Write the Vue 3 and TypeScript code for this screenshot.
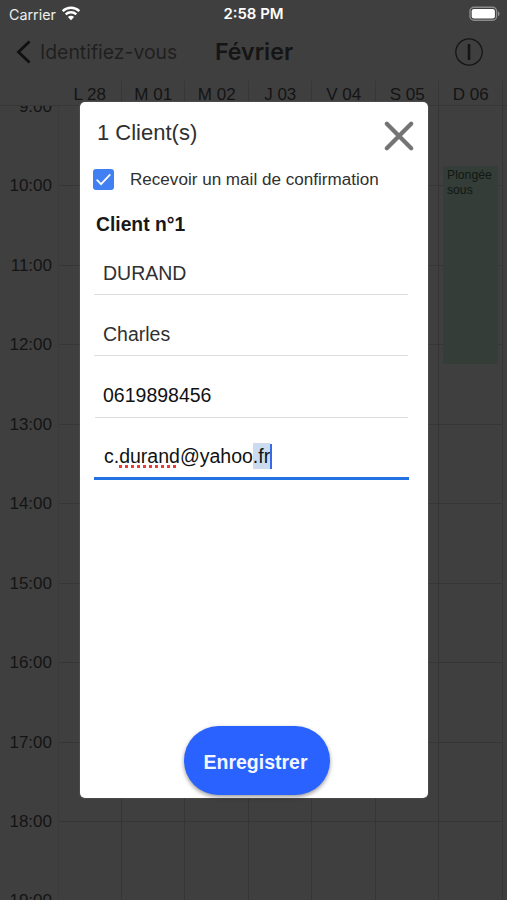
<script setup lang="ts">
import { ref } from 'vue'

interface Day { label: string; event?: string }

const days: Day[] = [
  { label: 'L 28' },
  { label: 'M 01' },
  { label: 'M 02' },
  { label: 'J 03' },
  { label: 'V 04' },
  { label: 'S 05' },
  { label: 'D 06', event: 'Plongée sous' },
]
const hours: string[] = Array.from({ length: 11 }, (_, i) => `${i + 9}:00`)
const sendMail = ref(true)
</script>

<template>
  <div class="screen">
    <div class="status">
      <div class="carrier">
        <span class="carrier-name">Carrier</span>
        <svg class="wifi" width="20" height="15" viewBox="0 0 20 15" fill="none" stroke="#fff">
          <path d="M1.700 5.100a12 12 0 0 1 16.600 0" stroke-width="2.500" />
          <path d="M4.700 8.400a7.700 7.700 0 0 1 10.600 0" stroke-width="2.400" />
          <path d="M10 14.200 6.900 11.100a4.400 4.400 0 0 1 6.200 0Z" fill="#fff" stroke="none" />
        </svg>
      </div>
      <span class="clock">2:58 PM</span>
      <svg class="battery" width="32" height="16" viewBox="0 0 32 16">
        <rect x="1" y="1.200" width="26.600" height="13" rx="4" fill="none" stroke="#8b8b8b" stroke-width="1.400" />
        <rect x="2.700" y="2.900" width="23.200" height="9.600" rx="2.300" fill="#fff" />
        <path d="M29 5.200c2 .8 2 4.200 0 5Z" fill="#8b8b8b" />
      </svg>
    </div>

    <nav class="nav">
      <div class="back">
        <svg width="16" height="26" viewBox="0 0 16 26" fill="none" stroke="#101010" stroke-width="2.800">
          <path d="M14.500 2.500 3.500 13l11 10.500" />
        </svg>
        <span class="back-text">Identifiez-vous</span>
      </div>
      <span class="title">Février</span>
      <svg class="info" width="30" height="30" viewBox="0 0 30 30" fill="none" stroke="#151515">
        <circle cx="15" cy="15" r="13.200" stroke-width="1.300" />
        <path d="M15 7v16" stroke-width="2.600" />
      </svg>
    </nav>

    <div class="days">
      <div v-for="d in days" :key="d.label" class="day">{{ d.label }}</div>
    </div>

    <div class="calendar">
      <div class="hours">
        <div v-for="h in hours" :key="h" class="hour"><span>{{ h }}</span></div>
      </div>
      <div v-for="d in days" :key="d.label" class="column">
        <div v-for="h in hours" :key="h" class="slot"></div>
        <div v-if="d.event" class="event">{{ d.event }}</div>
      </div>
    </div>

    <div class="modal">
      <header class="modal-head">
        <span class="modal-title">1 Client(s)</span>
        <svg class="close" width="32" height="32" viewBox="0 0 32 32" fill="none" stroke="#747474" stroke-width="4.300" stroke-linecap="round">
          <path d="M3.800 3.800 28.200 28.200M28.200 3.800 3.800 28.200" />
        </svg>
      </header>
      <div class="check" @click="sendMail = !sendMail">
        <span class="box">
          <svg v-if="sendMail" width="21" height="21" viewBox="0 0 21 21" fill="none" stroke="#fff" stroke-width="1.700">
            <path d="M3.700 10.700 8 15.200 17.300 5.300" />
          </svg>
        </span>
        <span class="check-text">Recevoir un mail de confirmation</span>
      </div>
      <h2 class="client">Client n°1</h2>
      <div class="field"><span>DURAND</span></div>
      <div class="field"><span>Charles</span></div>
      <div class="field dark phone"><span>0619898456</span></div>
      <div class="field dark active">
        <span>c.<span class="misspelled">durand</span>@yahoo<span class="selected">.fr</span></span><i class="caret"></i>
      </div>
      <button class="save"><span>Enregistrer</span></button>
    </div>
  </div>
</template>

<style>
body {
  background: #3f3f3f;
}
</style>

<style scoped>
.screen {
  position: relative;
  width: 507px;
  height: 900px;
  overflow: hidden;
  background: #3f3f3f;
  font-family: "Liberation Sans", Arial, sans-serif;
  color: #141414;
}
.status {
  display: grid;
  grid-template-columns: 1fr auto 1fr;
  align-items: center;
  height: 28px;
  padding: 0 6px 0 9px;
  box-sizing: border-box;
  color: #fff;
  font-family: Inter, sans-serif;
}
.carrier {
  display: flex;
  align-items: center;
  gap: 5px;
}
.carrier-name {
  font-size: 14.300px;
  color: #eee;
}
.wifi {
  margin-top: -2px;
}
.clock {
  margin-right: 3px;
  font-size: 14.900px;
  font-weight: 600;
}
.battery {
  justify-self: end;
  margin-top: -1px;
}
.nav {
  display: grid;
  grid-template-columns: 1fr auto 1fr;
  align-items: center;
  height: 48px;
  padding: 0 23px 0 15px;
}
.back {
  display: flex;
  align-items: center;
  gap: 9px;
}
.back-text {
  font-family: Inter, sans-serif;
  font-size: 19.400px;
  color: #1f1f1f;
  white-space: nowrap;
}
.title {
  margin-left: 9px;
  font-family: Inter, sans-serif;
  font-size: 23.200px;
  font-weight: 600;
  color: #151515;
}
.info {
  justify-self: end;
}
.days {
  display: grid;
  grid-template-columns: repeat(7, 63.500px);
  height: 29px;
  padding-left: 58px;
  align-items: end;
}
.day {
  height: 24px;
  box-sizing: border-box;
  padding-left: 1px;
  border-right: 1px solid #373737;
  font-size: 17px;
  line-height: 28px;
  text-align: center;
}
.calendar {
  display: grid;
  grid-template-columns: 58px repeat(7, 63.500px);
  height: 795px;
  overflow: hidden;
  border-top: 1px solid #373737;
}
.hour {
  display: flex;
  justify-content: flex-end;
  height: 79.450px;
  padding-right: 6px;
  font-size: 17px;
  line-height: 20px;
}
.hour span {
  margin-top: -9px;
}
.column {
  position: relative;
  border-right: 1px solid #353535;
}
.column:nth-child(2) {
  border-left: 1px solid #3b3b3b;
}
.slot {
  height: 79.450px;
  box-sizing: border-box;
  border-bottom: 1px solid #363636;
}
.slot:first-of-type {
  height: 80.450px;
}
.event {
  position: absolute;
  top: 60px;
  left: 4px;
  width: 55px;
  height: 198px;
  padding: 2px 0 0 4px;
  box-sizing: border-box;
  background: #343d37;
  font-size: 12.200px;
  line-height: 15px;
  color: #101813;
}
.modal {
  position: absolute;
  left: 80px;
  top: 102px;
  width: 348px;
  height: 696px;
  box-sizing: border-box;
  padding: 16px 20px 3px 14px;
  display: flex;
  flex-direction: column;
  background: #fff;
  border-radius: 5px;
  box-shadow: 0 0 1px 1px #6665;
}
.modal-head {
  display: flex;
  justify-content: space-between;
  height: 50px;
  padding-left: 3px;
  margin-right: -7px;
}
.modal-title {
  font-size: 22px;
  line-height: 30px;
  color: #303030;
}
.close {
  margin-top: 2px;
}
.check {
  display: flex;
  align-items: center;
  height: 22px;
  margin-left: -1px;
  gap: 16px;
}
.box {
  width: 21px;
  height: 21px;
  background: #4080f3;
  border-radius: 3px;
}
.box svg {
  display: block;
}
.check-text {
  margin-top: 2px;
  font-size: 17.080px;
  color: #303030;
  white-space: nowrap;
}
.client {
  margin: 23px 0 0 2px;
  font-size: 19.300px;
  line-height: 24px;
  color: #181818;
}
.field {
  display: flex;
  align-items: center;
  height: 61px;
  box-sizing: border-box;
  padding: 18px 0 0 9px;
  border-bottom: 1px solid #dedede;
  font-size: 19.500px;
  color: #303030;
}
.client + .field {
  height: 58px;
  padding-top: 15px;
}
.dark {
  color: #111;
}
.phone {
  margin-left: 1px;
  padding-left: 8px;
  height: 62px;
}
.active {
  margin: 0 -1px 0 0;
  height: 62px;
  padding: 18px 0 0 10px;
  border-bottom: 3px solid #2272e2;
}
.misspelled {
  text-decoration: underline dotted #ed3932 3px;
  text-underline-offset: 2px;
  text-decoration-skip-ink: none;
}
.selected {
  padding: 2px 0;
  background: #cbdcf0;
}
.caret {
  width: 2px;
  height: 25px;
  background: #3869e8;
}
.save {
  align-self: center;
  width: 146px;
  height: 69px;
  margin: auto 0 0 11px;
  padding: 4px 0 0;
  border: 0;
  border-radius: 35px;
  background: #2962ff;
  box-shadow: 0 2px 4px #0006;
  font: bold 19.500px "Liberation Sans", Arial, sans-serif;
  color: #f4f6ff;
}
.save span {
  margin-right: 2px;
}
</style>
